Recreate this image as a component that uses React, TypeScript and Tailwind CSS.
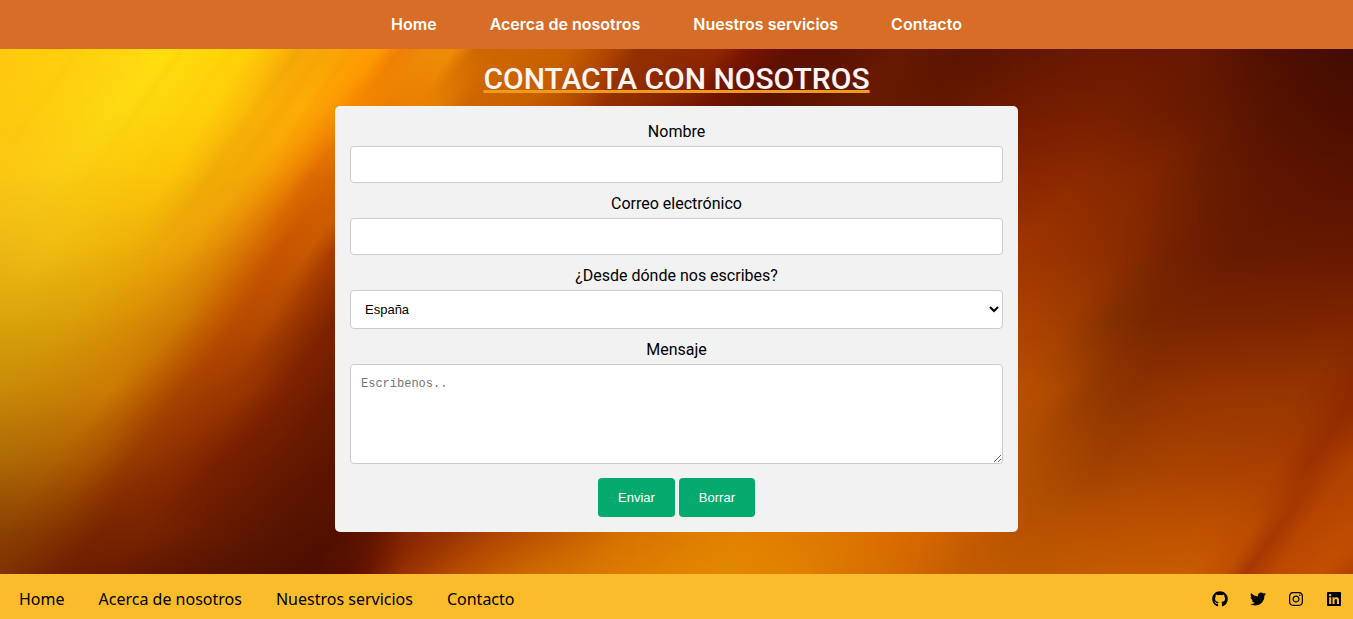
import { FaGithub, FaInstagram, FaLinkedin, FaTwitter } from "react-icons/fa";

type Stop = [number, string];
type Row = { y: number; stops: Stop[] };

const WIDTH = 1353;
const TOP = 49;
const BOTTOM = 574;
const SLANT = -0.72;

// Colour samples of the abstract light backdrop, one list per height.
const rows: Row[] = [
  {
    y: 49,
    stops: [[0, "#ffc90e"], [75, "#ffd010"], [140, "#ffd812"], [165, "#ffe010"], [200, "#ffd90c"], [250, "#ffd008"], [280, "#fcb808"], [300, "#f5a80a"], [325, "#f9a707"], [355, "#fca004"], [380, "#ff9a00"], [400, "#f08000"], [430, "#ee8c08"], [455, "#f08c05"], [475, "#d06800"], [520, "#cc6400"], [570, "#c86000"], [610, "#b04600"], [640, "#903000"], [720, "#902800"], [750, "#781400"], [790, "#601000"], [840, "#5c1200"], [900, "#661a00"], [960, "#5a1400"], [1013, "#601600"], [1100, "#681a00"], [1200, "#661800"], [1270, "#501000"], [1353, "#430c00"]],
  },
  {
    y: 113,
    stops: [[0, "#fec80e"], [60, "#fdcf10"], [110, "#fdd912"], [150, "#fdd60e"], [210, "#fecf09"], [250, "#f9b708"], [275, "#f9ab06"], [300, "#fdae05"], [325, "#fb9a04"], [345, "#f58a02"], [385, "#ea7c00"], [430, "#e88204"], [460, "#d06600"], [520, "#c86000"], [560, "#b85000"], [600, "#953000"], [650, "#852400"], [700, "#701400"], [760, "#5c1200"], [850, "#681a00"], [940, "#641800"], [1020, "#741c00"], [1100, "#781f00"], [1200, "#681a00"], [1280, "#541200"], [1353, "#4c0e00"]],
  },
  {
    y: 178,
    stops: [[0, "#fcc614"], [60, "#f9cc14"], [100, "#fbc80e"], [170, "#fbc508"], [210, "#f0ac08"], [245, "#f4a806"], [265, "#f29c06"], [290, "#ec8404"], [310, "#dc6a02"], [336, "#d86400"], [450, "#b85000"], [550, "#882800"], [700, "#5c1200"], [900, "#741e00"], [1020, "#8a2600"], [1080, "#8c2a00"], [1150, "#822600"], [1200, "#6c1e00"], [1260, "#601600"], [1353, "#581200"]],
  },
  {
    y: 249,
    stops: [[0, "#ecb814"], [50, "#f0bc12"], [130, "#ecaf08"], [190, "#eb9e08"], [220, "#e08a06"], [245, "#d87404"], [280, "#c85400"], [310, "#c85a00"], [336, "#a83c00"], [400, "#7c2200"], [700, "#681800"], [900, "#8c3000"], [1020, "#a03600"], [1080, "#943000"], [1130, "#882a00"], [1180, "#722000"], [1240, "#661a00"], [1353, "#661800"]],
  },
  {
    y: 320,
    stops: [[0, "#daa40c"], [70, "#daa00a"], [120, "#da9206"], [180, "#cf7c04"], [210, "#c46000"], [240, "#b84a00"], [270, "#b44a00"], [300, "#963400"], [336, "#7c2200"], [500, "#601400"], [800, "#963800"], [960, "#ac4400"], [1020, "#ac4200"], [1070, "#a03c00"], [1110, "#843000"], [1150, "#7a2600"], [1240, "#7a2400"], [1353, "#7e2400"]],
  },
  {
    y: 391,
    stops: [[0, "#c88a08"], [60, "#c88206"], [110, "#cc7a04"], [140, "#bc6402"], [180, "#a84400"], [215, "#a03a00"], [250, "#963400"], [280, "#802400"], [336, "#6a1a00"], [500, "#601400"], [800, "#c06000"], [1020, "#b85000"], [1060, "#ac4800"], [1090, "#963a00"], [1130, "#8c3200"], [1200, "#963400"], [1300, "#963600"], [1353, "#8e2a00"]],
  },
  {
    y: 462,
    stops: [[0, "#ac6a06"], [50, "#ae6204"], [90, "#a85402"], [130, "#963a00"], [180, "#8a2c00"], [220, "#782000"], [280, "#681a00"], [336, "#5c1400"], [420, "#6a1a00"], [520, "#a84400"], [740, "#dc7c00"], [1000, "#b85400"], [1060, "#a84800"], [1100, "#9e4000"], [1180, "#a84200"], [1280, "#a83e00"], [1310, "#9c3200"], [1353, "#b04200"]],
  },
  {
    y: 533,
    stops: [[0, "#8a4202"], [50, "#853600"], [100, "#782400"], [140, "#7a2400"], [200, "#6a1c00"], [260, "#5a1600"], [336, "#520f00"], [375, "#641600"], [405, "#842600"], [450, "#983400"], [500, "#b04800"], [560, "#c05c00"], [620, "#d47200"], [700, "#de7e00"], [740, "#e28200"], [800, "#e07c00"], [860, "#dc7200"], [930, "#d46600"], [980, "#c25a00"], [1020, "#b85400"], [1100, "#bc5200"], [1200, "#c05200"], [1250, "#bc4c00"], [1275, "#a63800"], [1300, "#b84600"], [1353, "#be4c00"]],
  },
  {
    y: 574,
    stops: [[0, "#803400"], [60, "#6e2000"], [110, "#6a1c00"], [180, "#5c1600"], [300, "#4e0e00"], [345, "#560f00"], [365, "#641400"], [400, "#963000"], [450, "#b44a00"], [520, "#cc6600"], [620, "#dc7c00"], [720, "#e28800"], [800, "#e08000"], [900, "#d46a00"], [960, "#c45c00"], [1020, "#bc5a00"], [1100, "#c45a00"], [1190, "#c85c00"], [1225, "#c05000"], [1245, "#a83800"], [1275, "#bc4a00"], [1320, "#c45000"], [1353, "#ae4000"]],
  },
];

const streaks = [
  { d: "M182 49 L60 218", color: "#f0b400", width: 3, opacity: 0.25 },
  { d: "M80 49 L10 146", color: "#f5b400", width: 4, opacity: 0.2 },
  { d: "M232 49 L120 204", color: "#f5b800", width: 4, opacity: 0.15 },
  { d: "M300 49 L170 230", color: "#e89a00", width: 8, opacity: 0.2 },
  { d: "M325 49 L215 202", color: "#e89a00", width: 4, opacity: 0.2 },
  { d: "M352 49 L290 135", color: "#ea8c00", width: 5, opacity: 0.2 },
];

function Backdrop() {
  return (
    <svg
      className="absolute inset-0 size-full"
      viewBox={`0 ${TOP} ${WIDTH} ${BOTTOM - TOP}`}
      preserveAspectRatio="none"
      aria-hidden="true"
    >
      <defs>
        <linearGradient id="fade" x1="0" y1="0" x2="0" y2="1">
          <stop offset="0" stopColor="#fff" stopOpacity="0" />
          <stop offset="1" stopColor="#fff" stopOpacity="1" />
        </linearGradient>
        <linearGradient id="streakFade" gradientUnits="userSpaceOnUse" x1="0" y1="49" x2="0" y2="230">
          <stop offset="0" stopColor="#fff" stopOpacity="1" />
          <stop offset="1" stopColor="#fff" stopOpacity="0" />
        </linearGradient>
        <mask id="streakMask" maskUnits="userSpaceOnUse" x="0" y="49" width={WIDTH} height="200" style={{ maskType: "alpha" }}>
          <rect x="0" y="49" width={WIDTH} height="200" fill="url(#streakFade)" />
        </mask>
        <filter id="soft" x="-20%" y="-20%" width="140%" height="140%">
          <feGaussianBlur stdDeviation="2" />
        </filter>
        {rows.map((row, i) => (
          <linearGradient
            key={i}
            id={`row${i}`}
            gradientUnits="userSpaceOnUse"
            x1="0"
            y1="0"
            x2={WIDTH}
            y2="0"
            gradientTransform={`matrix(1 0 ${SLANT} 1 ${-SLANT * row.y} 0)`}
          >
            {row.stops.map(([x, color]) => (
              <stop key={x} offset={x / WIDTH} stopColor={color} />
            ))}
          </linearGradient>
        ))}
        {rows.slice(1).map((row, i) => (
          <mask key={i} id={`mask${i}`} maskUnits="userSpaceOnUse" x="0" y={rows[i].y} width={WIDTH} height={row.y - rows[i].y} style={{ maskType: "alpha" }}>
            <rect x="0" y={rows[i].y} width={WIDTH} height={row.y - rows[i].y} fill="url(#fade)" />
          </mask>
        ))}
      </defs>
      {rows.slice(1).map((row, i) => {
        const y = rows[i].y;
        const height = row.y - y;
        return (
          <g key={i}>
            <rect x="0" y={y} width={WIDTH} height={height} fill={`url(#row${i})`} />
            <rect x="0" y={y} width={WIDTH} height={height} fill={`url(#row${i + 1})`} mask={`url(#mask${i})`} />
          </g>
        );
      })}
      <g mask="url(#streakMask)">
        <g filter="url(#soft)" fill="none">
          {streaks.map((s) => (
            <path key={s.d} d={s.d} stroke={s.color} strokeWidth={s.width} strokeOpacity={s.opacity} />
          ))}
        </g>
      </g>
    </svg>
  );
}

const links = ["Home", "Acerca de nosotros", "Nuestros servicios", "Contacto"];

const social = [
  { name: "GitHub", Icon: FaGithub },
  { name: "Twitter", Icon: FaTwitter },
  { name: "Instagram", Icon: FaInstagram },
  { name: "LinkedIn", Icon: FaLinkedin },
];

const field = "block w-full rounded-[4px] border border-[#ccc] bg-white";
const label = "mb-1 block pt-px text-center text-[16px] leading-5";
const button =
  "h-[39px] rounded-[4px] bg-[#04aa6d] px-5 font-['Liberation_Sans',sans-serif] text-[13px] text-white hover:bg-[#45a049]";

export default function App() {
  return (
    <div className="flex min-h-screen flex-col font-[Roboto,sans-serif] text-black">
      <header className="bg-[#d86d27]">
        <nav className="flex min-h-[49px] flex-wrap items-center justify-center gap-x-[53px] pb-px font-[Inter,sans-serif] text-[16px] font-semibold text-white">
          {links.map((text) => (
            <a key={text} href="#">
              {text}
            </a>
          ))}
        </nav>
      </header>

      <main className="relative flex-1 overflow-hidden">
        <Backdrop />
        <div className="relative flex flex-col items-center px-4 pt-3 pb-[42px]">
          <h1 className="mb-[9px] text-center text-[30px] leading-9 font-medium text-[#fff5f5] underline decoration-[#ee9a1c] decoration-[3px] underline-offset-[1px] [text-decoration-skip-ink:none]">
            CONTACTA CON NOSOTROS
          </h1>
          <form className="w-full max-w-[683px] rounded-[5px] bg-[#f2f2f2] p-[15px]" onSubmit={(e) => e.preventDefault()}>
            <div className="mb-[10px]">
              <label className={label} htmlFor="nombre">Nombre</label>
              <input id="nombre" type="text" className={`${field} h-[37px] px-[10px] text-[13px]`} />
            </div>
            <div className="mb-[10px]">
              <label className={label} htmlFor="correo">Correo electrónico</label>
              <input id="correo" type="email" className={`${field} h-[37px] px-[10px] text-[13px]`} />
            </div>
            <div className="mb-[10px]">
              <label className={label} htmlFor="pais">¿Desde dónde nos escribes?</label>
              <select
                id="pais"
                defaultValue="España"
                className={`${field} h-[39px] pl-[10px] font-['Liberation_Sans',sans-serif] text-[13px]`}
              >
                <option>España</option>
                <option>Portugal</option>
                <option>Francia</option>
              </select>
            </div>
            <div className="mb-[14px]">
              <label className={label} htmlFor="mensaje">Mensaje</label>
              <textarea
                id="mensaje"
                placeholder="Escríbenos.."
                className={`${field} h-[100px] resize p-[10px] font-['Liberation_Mono',monospace] text-[12px] leading-[18px] placeholder:text-[#757575]`}
              />
            </div>
            <div className="flex justify-center gap-1">
              <button type="submit" className={button}>Enviar</button>
              <button type="reset" className={button}>Borrar</button>
            </div>
          </form>
        </div>
      </main>

      <footer className="flex min-h-[45px] flex-wrap items-center justify-between bg-[#fbbc2c] pt-1 pr-[11px] pl-[19px]">
        <nav className="flex flex-wrap gap-x-[34px] font-['Noto_Sans',sans-serif] text-[16px]">
          {links.map((text) => (
            <a key={text} href="#">
              {text}
            </a>
          ))}
        </nav>
        <div className="flex gap-[22px] text-[16px]">
          {social.map(({ name, Icon }) => (
            <a key={name} href="#" aria-label={name}>
              <Icon />
            </a>
          ))}
        </div>
      </footer>
    </div>
  );
}
